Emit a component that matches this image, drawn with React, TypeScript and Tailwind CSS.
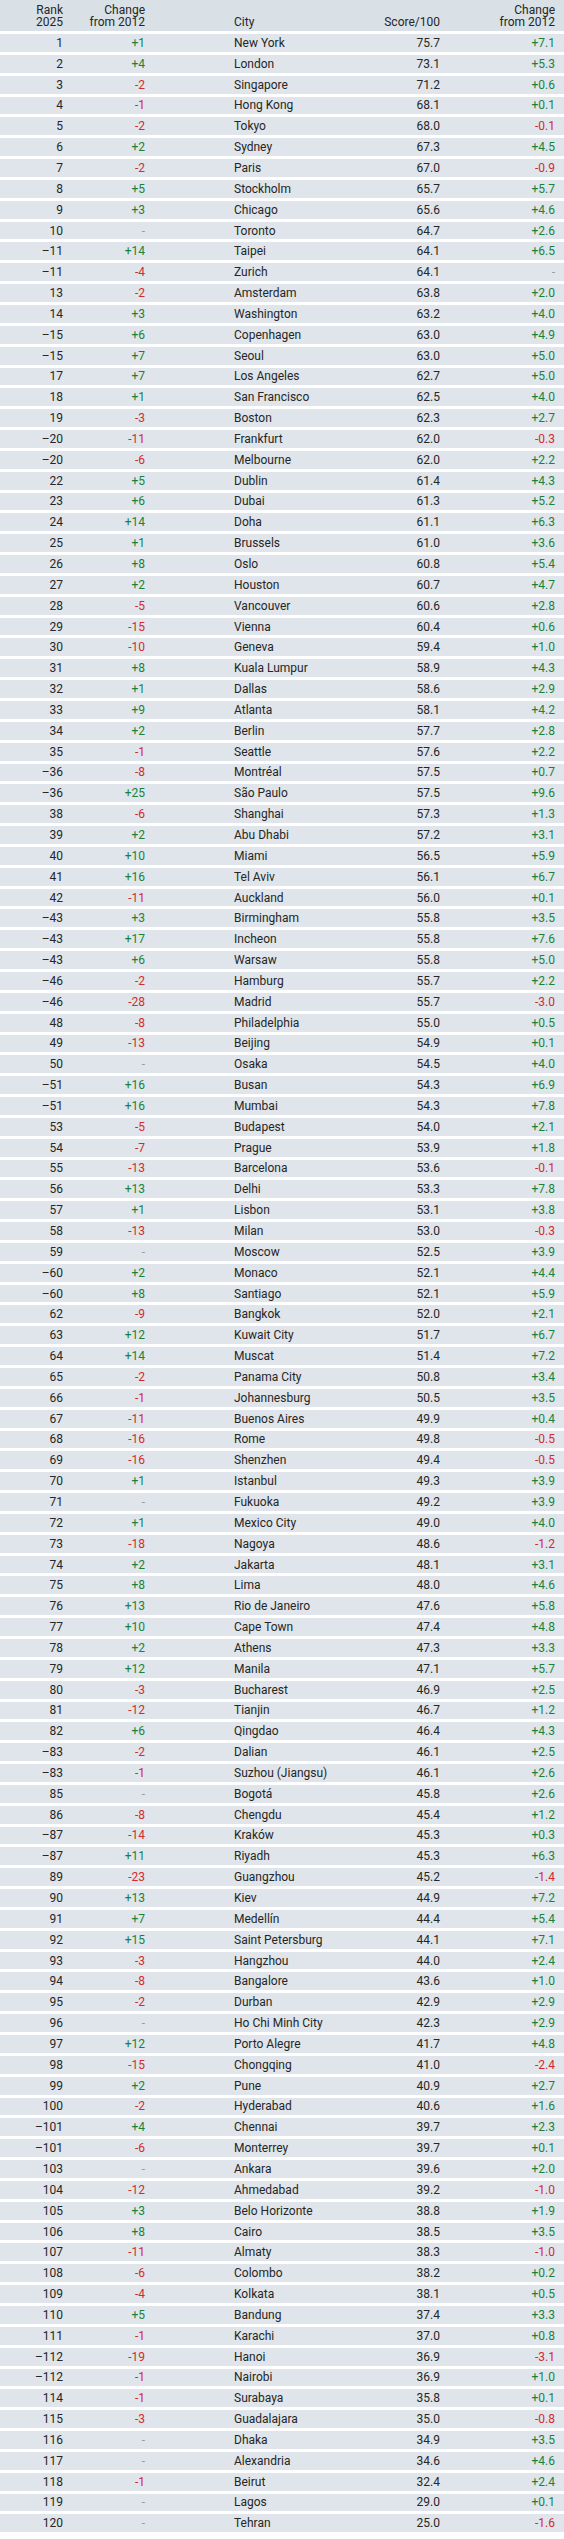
type Row = [string, string, string, string, string];

const rows: Row[] = [
  ["1", "+1", "New York", "75.7", "+7.1"],
  ["2", "+4", "London", "73.1", "+5.3"],
  ["3", "-2", "Singapore", "71.2", "+0.6"],
  ["4", "-1", "Hong Kong", "68.1", "+0.1"],
  ["5", "-2", "Tokyo", "68.0", "-0.1"],
  ["6", "+2", "Sydney", "67.3", "+4.5"],
  ["7", "-2", "Paris", "67.0", "-0.9"],
  ["8", "+5", "Stockholm", "65.7", "+5.7"],
  ["9", "+3", "Chicago", "65.6", "+4.6"],
  ["10", "-", "Toronto", "64.7", "+2.6"],
  ["=11", "+14", "Taipei", "64.1", "+6.5"],
  ["=11", "-4", "Zurich", "64.1", "-"],
  ["13", "-2", "Amsterdam", "63.8", "+2.0"],
  ["14", "+3", "Washington", "63.2", "+4.0"],
  ["=15", "+6", "Copenhagen", "63.0", "+4.9"],
  ["=15", "+7", "Seoul", "63.0", "+5.0"],
  ["17", "+7", "Los Angeles", "62.7", "+5.0"],
  ["18", "+1", "San Francisco", "62.5", "+4.0"],
  ["19", "-3", "Boston", "62.3", "+2.7"],
  ["=20", "-11", "Frankfurt", "62.0", "-0.3"],
  ["=20", "-6", "Melbourne", "62.0", "+2.2"],
  ["22", "+5", "Dublin", "61.4", "+4.3"],
  ["23", "+6", "Dubai", "61.3", "+5.2"],
  ["24", "+14", "Doha", "61.1", "+6.3"],
  ["25", "+1", "Brussels", "61.0", "+3.6"],
  ["26", "+8", "Oslo", "60.8", "+5.4"],
  ["27", "+2", "Houston", "60.7", "+4.7"],
  ["28", "-5", "Vancouver", "60.6", "+2.8"],
  ["29", "-15", "Vienna", "60.4", "+0.6"],
  ["30", "-10", "Geneva", "59.4", "+1.0"],
  ["31", "+8", "Kuala Lumpur", "58.9", "+4.3"],
  ["32", "+1", "Dallas", "58.6", "+2.9"],
  ["33", "+9", "Atlanta", "58.1", "+4.2"],
  ["34", "+2", "Berlin", "57.7", "+2.8"],
  ["35", "-1", "Seattle", "57.6", "+2.2"],
  ["=36", "-8", "Montréal", "57.5", "+0.7"],
  ["=36", "+25", "São Paulo", "57.5", "+9.6"],
  ["38", "-6", "Shanghai", "57.3", "+1.3"],
  ["39", "+2", "Abu Dhabi", "57.2", "+3.1"],
  ["40", "+10", "Miami", "56.5", "+5.9"],
  ["41", "+16", "Tel Aviv", "56.1", "+6.7"],
  ["42", "-11", "Auckland", "56.0", "+0.1"],
  ["=43", "+3", "Birmingham", "55.8", "+3.5"],
  ["=43", "+17", "Incheon", "55.8", "+7.6"],
  ["=43", "+6", "Warsaw", "55.8", "+5.0"],
  ["=46", "-2", "Hamburg", "55.7", "+2.2"],
  ["=46", "-28", "Madrid", "55.7", "-3.0"],
  ["48", "-8", "Philadelphia", "55.0", "+0.5"],
  ["49", "-13", "Beijing", "54.9", "+0.1"],
  ["50", "-", "Osaka", "54.5", "+4.0"],
  ["=51", "+16", "Busan", "54.3", "+6.9"],
  ["=51", "+16", "Mumbai", "54.3", "+7.8"],
  ["53", "-5", "Budapest", "54.0", "+2.1"],
  ["54", "-7", "Prague", "53.9", "+1.8"],
  ["55", "-13", "Barcelona", "53.6", "-0.1"],
  ["56", "+13", "Delhi", "53.3", "+7.8"],
  ["57", "+1", "Lisbon", "53.1", "+3.8"],
  ["58", "-13", "Milan", "53.0", "-0.3"],
  ["59", "-", "Moscow", "52.5", "+3.9"],
  ["=60", "+2", "Monaco", "52.1", "+4.4"],
  ["=60", "+8", "Santiago", "52.1", "+5.9"],
  ["62", "-9", "Bangkok", "52.0", "+2.1"],
  ["63", "+12", "Kuwait City", "51.7", "+6.7"],
  ["64", "+14", "Muscat", "51.4", "+7.2"],
  ["65", "-2", "Panama City", "50.8", "+3.4"],
  ["66", "-1", "Johannesburg", "50.5", "+3.5"],
  ["67", "-11", "Buenos Aires", "49.9", "+0.4"],
  ["68", "-16", "Rome", "49.8", "-0.5"],
  ["69", "-16", "Shenzhen", "49.4", "-0.5"],
  ["70", "+1", "Istanbul", "49.3", "+3.9"],
  ["71", "-", "Fukuoka", "49.2", "+3.9"],
  ["72", "+1", "Mexico City", "49.0", "+4.0"],
  ["73", "-18", "Nagoya", "48.6", "-1.2"],
  ["74", "+2", "Jakarta", "48.1", "+3.1"],
  ["75", "+8", "Lima", "48.0", "+4.6"],
  ["76", "+13", "Rio de Janeiro", "47.6", "+5.8"],
  ["77", "+10", "Cape Town", "47.4", "+4.8"],
  ["78", "+2", "Athens", "47.3", "+3.3"],
  ["79", "+12", "Manila", "47.1", "+5.7"],
  ["80", "-3", "Bucharest", "46.9", "+2.5"],
  ["81", "-12", "Tianjin", "46.7", "+1.2"],
  ["82", "+6", "Qingdao", "46.4", "+4.3"],
  ["=83", "-2", "Dalian", "46.1", "+2.5"],
  ["=83", "-1", "Suzhou (Jiangsu)", "46.1", "+2.6"],
  ["85", "-", "Bogotá", "45.8", "+2.6"],
  ["86", "-8", "Chengdu", "45.4", "+1.2"],
  ["=87", "-14", "Kraków", "45.3", "+0.3"],
  ["=87", "+11", "Riyadh", "45.3", "+6.3"],
  ["89", "-23", "Guangzhou", "45.2", "-1.4"],
  ["90", "+13", "Kiev", "44.9", "+7.2"],
  ["91", "+7", "Medellín", "44.4", "+5.4"],
  ["92", "+15", "Saint Petersburg", "44.1", "+7.1"],
  ["93", "-3", "Hangzhou", "44.0", "+2.4"],
  ["94", "-8", "Bangalore", "43.6", "+1.0"],
  ["95", "-2", "Durban", "42.9", "+2.9"],
  ["96", "-", "Ho Chi Minh City", "42.3", "+2.9"],
  ["97", "+12", "Porto Alegre", "41.7", "+4.8"],
  ["98", "-15", "Chongqing", "41.0", "-2.4"],
  ["99", "+2", "Pune", "40.9", "+2.7"],
  ["100", "-2", "Hyderabad", "40.6", "+1.6"],
  ["=101", "+4", "Chennai", "39.7", "+2.3"],
  ["=101", "-6", "Monterrey", "39.7", "+0.1"],
  ["103", "-", "Ankara", "39.6", "+2.0"],
  ["104", "-12", "Ahmedabad", "39.2", "-1.0"],
  ["105", "+3", "Belo Horizonte", "38.8", "+1.9"],
  ["106", "+8", "Cairo", "38.5", "+3.5"],
  ["107", "-11", "Almaty", "38.3", "-1.0"],
  ["108", "-6", "Colombo", "38.2", "+0.2"],
  ["109", "-4", "Kolkata", "38.1", "+0.5"],
  ["110", "+5", "Bandung", "37.4", "+3.3"],
  ["111", "-1", "Karachi", "37.0", "+0.8"],
  ["=112", "-19", "Hanoi", "36.9", "-3.1"],
  ["=112", "-1", "Nairobi", "36.9", "+1.0"],
  ["114", "-1", "Surabaya", "35.8", "+0.1"],
  ["115", "-3", "Guadalajara", "35.0", "-0.8"],
  ["116", "-", "Dhaka", "34.9", "+3.5"],
  ["117", "-", "Alexandria", "34.6", "+4.6"],
  ["118", "-1", "Beirut", "32.4", "+2.4"],
  ["119", "-", "Lagos", "29.0", "+0.1"],
  ["120", "-", "Tehran", "25.0", "-1.6"],
];

function changeColor(value: string) {
  if (value === "-") return "text-[#9a9a9a]";
  return value.startsWith("+") ? "text-[#17833a]" : "text-[#d42a2f]";
}

function rankLabel(rank: string) {
  return rank.startsWith("=") ? "\u2013" + rank.slice(1) : rank;
}

export default function App() {
  return (
    <div className="w-[564px] bg-white pb-[6px] font-['Liberation_Sans_Narrow','Roboto',sans-serif] text-[12px] text-[#262626]">
      <div className="grid h-[31px] grid-cols-[63px_82px_235px_60px_115px_9px] items-end bg-[#d9e1e7] pb-[3px] leading-[12px]">
        <div className="text-right">
          Rank
          <br />
          2025
        </div>
        <div className="text-right">
          Change
          <br />
          from 2012
        </div>
        <div className="pl-[89px]">City</div>
        <div className="text-right">Score/100</div>
        <div className="text-right">
          Change
          <br />
          from 2012
        </div>
        <div />
      </div>
      {rows.map(([rank, change, city, score, scoreChange]) => (
        <div
          key={rank + city}
          className="mt-[3px] grid h-[17.85px] grid-cols-[63px_82px_235px_60px_115px_9px] items-center bg-[#dfe5ea] leading-none"
        >
          <div className="text-right">{rankLabel(rank)}</div>
          <div className={`text-right ${changeColor(change)}`}>{change}</div>
          <div className="pl-[89px]">{city}</div>
          <div className="text-right">{score}</div>
          <div className={`text-right ${changeColor(scoreChange)}`}>{scoreChange}</div>
          <div />
        </div>
      ))}
    </div>
  );
}
